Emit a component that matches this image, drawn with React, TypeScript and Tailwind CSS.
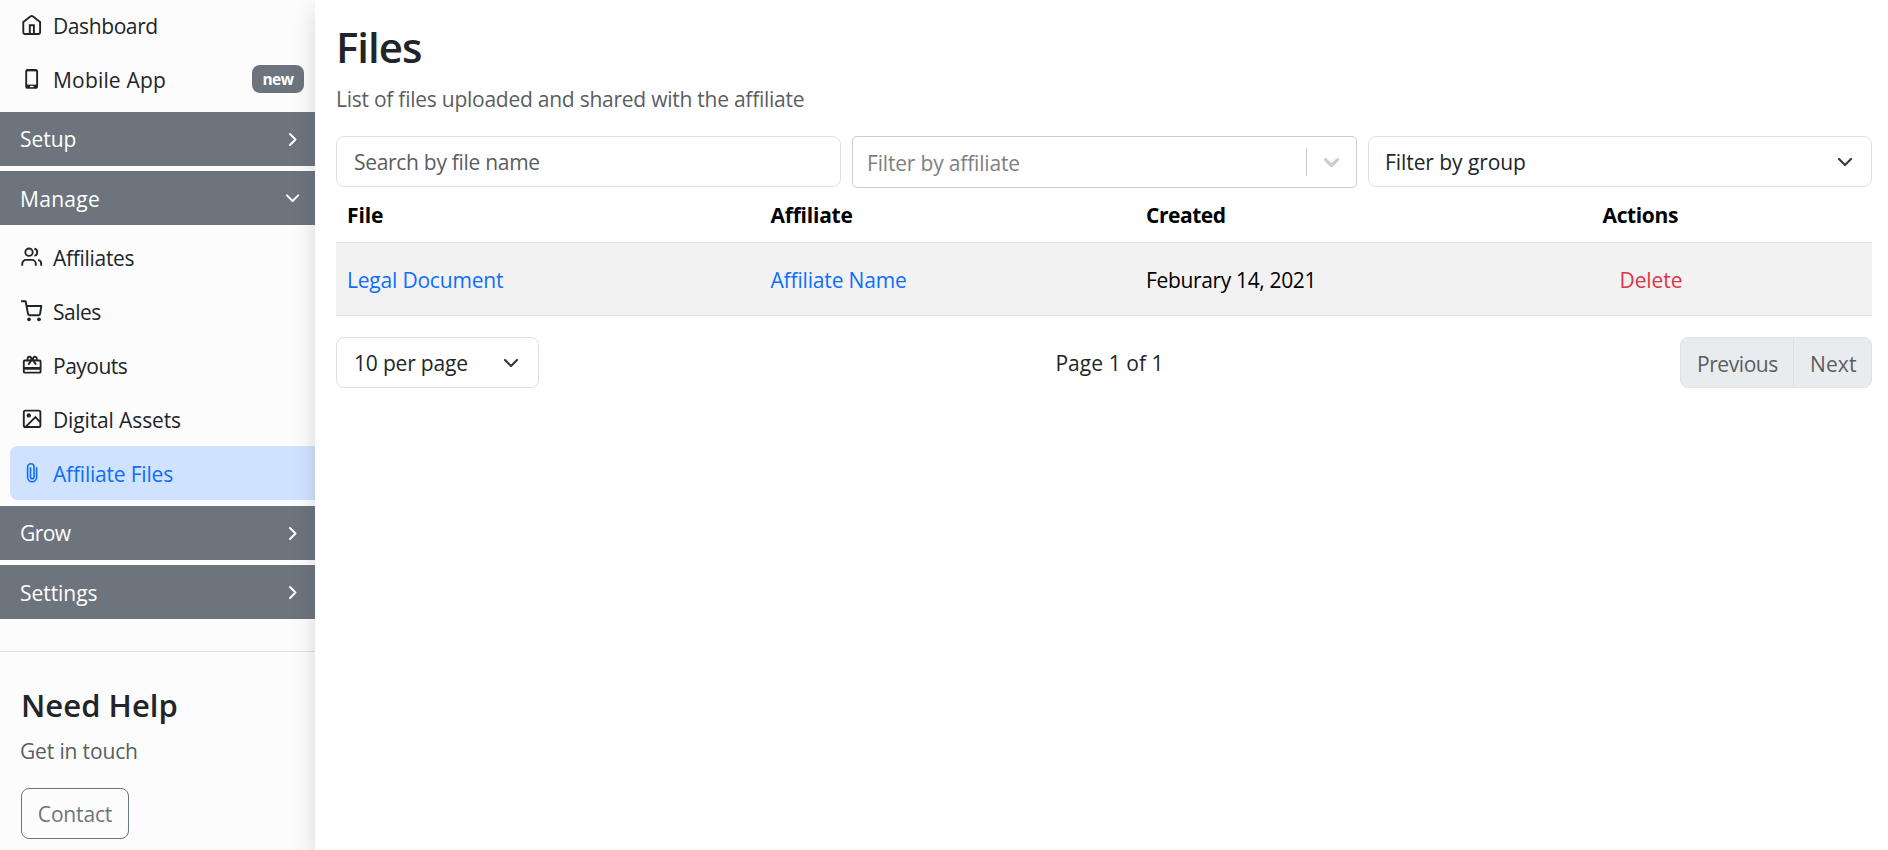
import React from "react";
import { MdCardGiftcard } from "react-icons/md";

type IconProps = { children: React.ReactNode };

function Icon({ children }: IconProps) {
  return (
    <svg width="24" height="24" viewBox="0 0 24 24" fill="none" stroke="currentColor" strokeWidth="1.9" strokeLinejoin="round" className="shrink-0">
      {children}
    </svg>
  );
}

const HomeIcon = () => (
  <Icon>
    <path d="M3.3 8.9 10.7 3.3a1.7 1.7 0 0 1 2 0L20.1 8.9V19.2a1.8 1.8 0 0 1-1.8 1.8H5.1a1.8 1.8 0 0 1-1.8-1.8Z" />
    <path d="M9.8 21v-8.8h4.1V21" strokeLinejoin="miter" />
  </Icon>
);

const PhoneIcon = () => (
  <Icon>
    <rect x="6.2" y="3" width="10.9" height="17.8" rx="1.6" />
    <path d="M6.4 3.4h10.5" />
    <path d="M6.2 17.6h10.9V20.6H6.2z" fill="currentColor" stroke="none" />
    <path d="M10 19.5h3.6" stroke="#fcfcfc" strokeWidth="1.3" />
  </Icon>
);

const UsersIcon = () => (
  <Icon>
    <circle cx="9" cy="7.2" r="3.7" />
    <path d="M2.2 20.8v-1.9a4 4 0 0 1 4-4h5.6a4 4 0 0 1 4 4v1.9" />
    <path d="M14.4 3.6a3.7 3.7 0 0 1 0 7.2" />
    <path d="M18.2 14.8a4 4 0 0 1 3 3.9v2.1" />
  </Icon>
);

const CartIcon = () => (
  <Icon>
    <path d="M1.1 2.2H5.6L8 14.7q.3 1.5 1.7 1.5h8.9q1.3 0 1.5-1.3L21.3 7H6.5" />
    <circle cx="9" cy="20.3" r="1.9" fill="currentColor" stroke="none" />
    <circle cx="19" cy="20.3" r="1.9" fill="currentColor" stroke="none" />
  </Icon>
);

const ImageIcon = () => (
  <Icon>
    <rect x="3.8" y="3.6" width="16.6" height="16.4" rx="1.6" />
    <circle cx="8.8" cy="8.4" r="2.2" fill="currentColor" stroke="none" />
    <path d="M5.6 19.8 15.4 10l5 5.3" strokeLinejoin="miter" />
  </Icon>
);

const ClipIcon = () => (
  <Icon>
    <path strokeWidth="1.6" d="M16.6 6.2V16.3a4.5 4.5 0 0 1-9 0V6a3.2 3.2 0 0 1 6.4 0v9.9a1.75 1.75 0 0 1-3.5 0V6.2" />
  </Icon>
);

const GiftIcon = () => (
  <span className="flex h-6 w-6 shrink-0 items-center justify-center">
    <MdCardGiftcard size={22.4} />
  </span>
);

function NavItem({ icon, label, tracking, badge }: { icon: React.ReactNode; label: string; tracking: string; badge?: string }) {
  return (
    <a className="flex h-[54px] items-center pl-5 pr-[11px] text-[#212529]">
      {icon}
      <span className={`pl-[9px] pt-[2px] leading-[54px] ${tracking}`}>{label}</span>
      {badge && (
        <span className="ml-auto h-7 w-[52px] rounded-lg bg-[#6c757d] text-center text-[15.5px] leading-[29px] font-bold tracking-[-0.5px] text-white">
          {badge}
        </span>
      )}
    </a>
  );
}

function Section({ label, tracking, open, offset = "" }: { label: string; tracking: string; open?: boolean; offset?: string }) {
  return (
    <div className="flex h-[54px] items-center justify-between bg-[#6c757d] pl-5 pr-[14px] text-white">
      <span className={`leading-[54px] ${tracking} ${offset}`}>{label}</span>
      <svg width="17" height="17" viewBox="0 0 17 17" fill="none" stroke="currentColor" strokeWidth="2" strokeLinecap="round" strokeLinejoin="round">
        {open ? <path d="M3 5.4 8.6 11l5.6-5.6" /> : <path d="M6 3l5.5 5.5L6 14" />}
      </svg>
    </div>
  );
}

function Caret() {
  return (
    <svg width="16" height="16" viewBox="0 0 16 16" fill="none" stroke="#343a40" strokeWidth="2.2" strokeLinecap="round" strokeLinejoin="round">
      <path d="M2 5l6 6 6-6" />
    </svg>
  );
}

function Sidebar() {
  return (
    <aside className="w-[315px] shrink-0 bg-[#fcfcfc]">
      <nav className="-mt-[2px]">
        <NavItem icon={<HomeIcon />} label="Dashboard" tracking="tracking-[-0.4px]" />
        <NavItem icon={<PhoneIcon />} label="Mobile App" tracking="tracking-[0.18px]" badge="new" />
        <div className="flex flex-col gap-[5px] pt-[6px]">
          <Section label="Setup" tracking="tracking-[-0.04px]" />
          <Section label="Manage" tracking="tracking-[0.3px]" open offset="pt-[2px]" />
        </div>
        <div className="py-[5px] pb-[6px]">
          <NavItem icon={<UsersIcon />} label="Affiliates" tracking="tracking-[-0.3px]" />
          <NavItem icon={<CartIcon />} label="Sales" tracking="tracking-[-0.5px]" />
          <NavItem icon={<GiftIcon />} label="Payouts" tracking="tracking-[-0.5px]" />
          <NavItem icon={<ImageIcon />} label="Digital Assets" tracking="tracking-[-0.13px]" />
          <a className="ml-[10px] flex h-[54px] items-center rounded-l-lg bg-[#cfe2ff] pl-[10px] text-[#0d6efd]">
            <ClipIcon />
            <span className="pl-[9px] pt-[2px] leading-[54px] tracking-[-0.2px]">Affiliate Files</span>
          </a>
        </div>
        <div className="flex flex-col gap-[5px]">
          <Section label="Grow" tracking="tracking-[-0.6px]" />
          <Section label="Settings" tracking="tracking-[-0.05px]" offset="pt-[2px]" />
        </div>
      </nav>
      <div className="mt-8 border-t border-[#dedfe0] pl-5 pt-[33px]">
        <h2 className="pl-px text-[31px] leading-[40px] font-semibold tracking-[0.05px]">Need Help</h2>
        <p className="mt-[9px] leading-[34px] tracking-[-0.15px] text-[#5a5e62]">Get in touch</p>
        <button className="mt-[20px] ml-px block h-[51px] w-[108px] rounded-lg border border-[#6c757d] text-center leading-[51px] tracking-[-0.16px] text-[#6c757d]">
          Contact
        </button>
      </div>
    </aside>
  );
}

export default function App() {
  return (
    <div className="flex h-[850px] w-full overflow-hidden bg-white font-['Open_Sans','Noto_Sans',sans-serif] text-[21px] text-[#212529]">
      <Sidebar />
      <main className="relative min-w-0 flex-1 bg-white pl-[21px] pr-4 pt-[22px] shadow-[0_11px_22px_rgba(0,0,0,0.15)]">
        <h1 className="text-[42px] leading-[50px] font-semibold tracking-[-1px]">Files</h1>
        <p className="mt-[10px] leading-[34px] tracking-[-0.25px] text-[#5a5e62]">List of files uploaded and shared with the affiliate</p>

        <div className="mt-5 grid h-[52px] grid-cols-[505px_505px_504px] items-start gap-[11px]">
          <div className="h-[51px] rounded-lg border border-[#dee2e6] pl-[17px] leading-[50px] tracking-[-0.3px] text-[#5a5e62]">
            Search by file name
          </div>
          <div className="flex h-[52px] items-center rounded-[5px] border border-[#ccc] pl-[14px] text-[#808080]">
            <span className="flex-1 pt-px leading-[52px] tracking-[-0.18px]">Filter by affiliate</span>
            <span className="h-7 w-px bg-[#ccc]" />
            <svg width="49" height="20" viewBox="0 0 49 20" fill="none" stroke="#ccc" strokeWidth="3.2" strokeLinecap="round" strokeLinejoin="round">
              <path d="M18.6 7.6l6 6 6-6" />
            </svg>
          </div>
          <div className="flex h-[51px] items-center justify-between rounded-lg border border-[#dee2e6] pl-[16px] pr-[18px]">
            <span className="leading-[50px] tracking-[-0.07px]">Filter by group</span>
            <Caret />
          </div>
        </div>

        <div className="text-black">
          <div className="grid h-[55px] grid-cols-[423.5px_375.5px_456.5px_1fr] border-b border-[#dee2e6] pl-[11px] leading-[54px] font-bold">
            <span className="tracking-[-0.11px]">File</span>
            <span className="tracking-[-0.22px]">Affiliate</span>
            <span className="tracking-[-0.46px]">Created</span>
            <span className="tracking-[-0.36px]">Actions</span>
          </div>
          <div className="grid h-[73px] grid-cols-[423.5px_375.5px_456.5px_1fr] border-b border-[#dee2e6] bg-[#f2f2f2] pl-[11px] leading-[75px]">
            <span className="tracking-[-0.2px] text-[#0d6efd]">Legal Document</span>
            <span className="tracking-[-0.16px] text-[#0d6efd]">Affiliate Name</span>
            <span className="tracking-[-0.35px]">Feburary 14, 2021</span>
            <span className="pl-[17px] tracking-[-0.08px] text-[#dc3545]">Delete</span>
          </div>
        </div>

        <div className="mt-[21px] flex h-[51px] items-stretch justify-between leading-[53px]">
          <div className="flex w-[203px] items-center justify-between rounded-lg border border-[#dee2e6] pl-[17px] pr-[19px]">
            <span className="pt-[2px] tracking-[-0.19px]">10 per page</span>
            <Caret />
          </div>
          <span className="tracking-[0.05px]">Page 1 of 1</span>
          <div className="flex rounded-lg border border-[#dee2e6] bg-[#e9ecef] leading-[52px] text-[#5a5e62]">
            <span className="w-[113px] border-r border-[#dee2e6] pl-[16px] tracking-[-0.43px]">Previous</span>
            <span className="w-[77px] pl-[16px] tracking-[0.13px]">Next</span>
          </div>
        </div>
      </main>
    </div>
  );
}
